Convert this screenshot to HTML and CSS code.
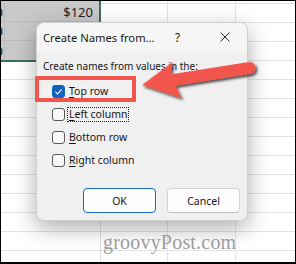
FILE: index.html
```html
<!DOCTYPE html>
<html>
<head>
<meta charset="utf-8">
<link rel="stylesheet" href="styles.css">
</head>
<body>
<div class="frame">
  <div class="sel">
    <div class="cell a"><span>$100</span></div><div class="cell b">$120</div>
    <div class="cell a"><span>$100</span></div><div class="cell b"></div>
    <div class="cell a"><span>$100</span></div><div class="cell b"></div>
  </div>

  <div class="dialog">
    <div class="titlebar">
      <span class="title">Create Names from...</span>
      <span class="help">?</span>
      <svg class="close" width="10" height="10" viewBox="0 0 10 10"><path d="M0.5 0.5 L9.5 9.5 M9.5 0.5 L0.5 9.5" stroke="#2b2b2b" stroke-width="1" fill="none"/></svg>
    </div>
    <div class="body">
      <div class="lead">Create names from values in the:</div>
      <div class="opts">
        <div class="opt"><span class="cb on"><svg width="13" height="13" viewBox="0 0 13 13"><path d="M3.4 6.9 L5.5 8.9 L9.7 4.4" stroke="#fff" stroke-width="1.1" fill="none"/></svg></span><span class="txt"><u>T</u>op row</span></div>
        <div class="opt"><span class="cb"></span><span class="txt focus"><u>L</u>eft column</span></div>
        <div class="opt"><span class="cb"></span><span class="txt"><u>B</u>ottom row</span></div>
        <div class="opt"><span class="cb"></span><span class="txt"><u>R</u>ight column</span></div>
      </div>
      <div class="btns">
        <div class="btn def">OK</div>
        <div class="btn">Cancel</div>
      </div>
    </div>
  </div>

  <div class="redbox"></div>

  <svg class="arrow" width="296" height="264" viewBox="0 0 296 264">
    <defs>
      <filter id="sh" x="-20%" y="-40%" width="140%" height="180%">
        <feDropShadow dx="1.5" dy="2.5" stdDeviation="1.2" flood-color="#202020" flood-opacity="0.75"/>
      </filter>
    </defs>
    <g transform="translate(142 85) rotate(-9)">
      <path d="M0 0 L34 -18 L30 -6 L109 -6 A6 6 0 0 1 109 6 L33 6 L37 19 Z" fill="#f2554c" filter="url(#sh)"/>
    </g>
  </svg>

  <div class="watermark">groovyPost.com</div>
</div>
</body>
</html>
```

FILE: styles.css
```css
* { box-sizing: border-box; }
html, body { margin: 0; padding: 0; background: #fff; }
body { font-family: "Noto Sans", "Liberation Sans", sans-serif; }

.frame {
  width: 296px;
  height: 264px;
  border: 1px solid #000;
  border-bottom-width: 2px;
  position: relative;
  overflow: hidden;
  background-color: #fff;
  background-image:
    linear-gradient(to right, transparent 99px, #dedede 99px 100px, transparent 100px 166px, #e4e4e4 166px 167px, transparent 167px 234px, #e4e4e4 234px 235px, transparent 235px),
    linear-gradient(to bottom, transparent 18px, #e2e2e2 18px);
  background-size: 100% 100%, 100% 19px;
  background-position: 0 0, 0 3px;
}

.sel {
  width: 100px;
  display: grid;
  grid-template-columns: 4px 1fr;
  grid-auto-rows: 19px;
  padding-top: 2px;
  background: #c9c9c9;
  border-right: 2px solid #3f6c5e;
  border-bottom: 2px solid #3f6c5e;
}
.cell {
  font-size: 13px;
  color: #1e1e1e;
  border-bottom: 1px solid #bcbcbc;
  display: flex;
  align-items: center;
  justify-content: flex-end;
  overflow: hidden;
  white-space: nowrap;
}
.cell:nth-last-child(-n+2) { border-bottom: none; }
.cell.a { border-right: 1px solid #bcbcbc; padding-right: 1px; }
.cell.b { padding-right: 6px; }

.dialog {
  position: absolute;
  left: 35px;
  top: 21px;
  width: 212px;
  height: 199px;
  background: #f0f0f0;
  border: 1px solid #cfcfcf;
  border-radius: 8px;
  box-shadow: 0 7px 22px rgba(0,0,0,0.32);
  color: #161616;
  display: flex;
  flex-direction: column;
}
.titlebar {
  height: 28px;
  flex: none;
  display: flex;
  align-items: center;
  padding-left: 6px;
  background: #f6f6f6;
  border-radius: 8px 8px 0 0;
  font-size: 11.2px;
}
.title { flex: 1 1 auto; min-width: 0; white-space: nowrap; }
.help { flex: none; width: 7px; font-size: 12px; }
.close { flex: none; display: block; margin-left: 38px; margin-right: 17px; }

.body { padding: 0 7px 0 6px; font-size: 10px; }
.lead { margin-top: 7px; line-height: 16px; }
.opts { margin-top: 6px; display: flex; flex-direction: column; }
.opt { height: 23px; display: flex; align-items: center; padding-left: 9px; }
.cb {
  width: 13px;
  height: 13px;
  border: 1px solid #5b5b5b;
  border-radius: 3px;
  background: #f8f8f8;
  display: block;
  flex: none;
}
.cb.on { background: #1062c0; border-color: #1062c0; }
.cb svg { display: block; margin: -1px; }
.txt { margin-left: 2px; padding: 0 1px; border: 1px solid transparent; line-height: 13px; font-size: 10.5px; }
.txt.focus { border: 1px dotted #222; }
u { text-decoration-thickness: 1px; text-underline-offset: 2px; }

.btns {
  margin-top: 16px;
  display: flex;
  justify-content: flex-end;
  gap: 11px;
}
.btn {
  width: 73px;
  height: 25px;
  background: #fdfdfd;
  border: 1px solid #d3d3d3;
  border-bottom-color: #bdbdbd;
  border-radius: 4px;
  display: flex;
  align-items: center;
  justify-content: center;
  font-size: 10.5px;
}
.btn.def { border: 1px solid #1b6ac9; }

.redbox {
  position: absolute;
  left: 34px;
  top: 75px;
  width: 101px;
  height: 26px;
  border: 4px solid #f2554c;
  border-radius: 1px;
}

.arrow { position: absolute; left: -1px; top: -1px; pointer-events: none; }

.watermark {
  position: absolute;
  left: 102px;
  top: 230px;
  font-family: "Liberation Serif", "DejaVu Serif", serif;
  font-size: 20px;
  color: #9d9d9d;
  letter-spacing: 0.2px;
}
```
